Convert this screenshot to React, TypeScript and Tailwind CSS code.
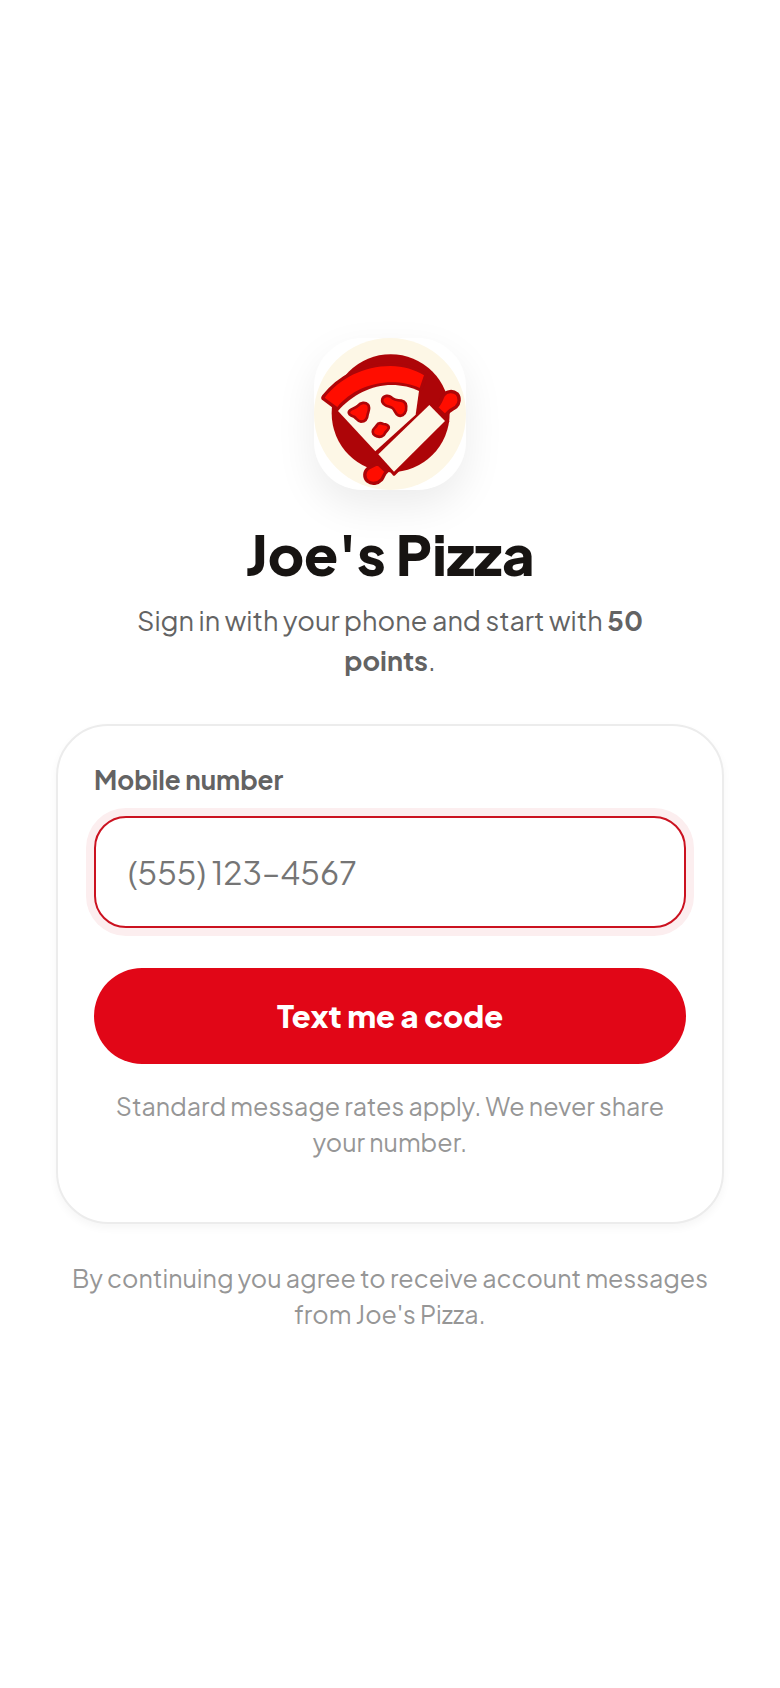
import { useState } from 'react';

const PizzaLogo = () => (
    <svg viewBox="42 39 456 456" className="block h-full w-full" role="img" aria-label="Joe's Pizza logo">
        <circle cx="270" cy="267" r="228" fill="#fdf7e6" />
        <circle cx="272" cy="265" r="177" fill="#ad0508" />

        {/* Slice: crust, then cheese */}
        <path
            d="M74 218 C120 160 190 123 272 123 C310 123 345 134 372 151 L359 189 C335 178 305 172 275 172 C210 172 150 200 112 246 Z"
            fill="#ff0d00"
            stroke="#ad0508"
            strokeWidth="20"
            strokeLinejoin="round"
            paintOrder="stroke"
        />
        <path d="M114 258 C155 210 215 180 275 180 C305 180 335 187 357 198 L347 269 L226 379 Z" fill="#fdf7e6" />

        {/* Toppings */}
        <g fill="#ff0d00" stroke="#ad0508" strokeWidth="8" strokeLinejoin="round">
            <path d="M149 257 C155 249 167 250 174 242 C182 232 196 231 204 239 C211 248 206 258 203 268 C202 280 196 290 183 290 C173 289 169 280 162 275 C151 272 142 265 149 257 Z" />
            <path d="M247 222 C252 211 266 210 274 217 C281 224 291 226 304 227 C319 230 320 244 318 256 C315 270 304 276 293 270 C285 264 284 254 277 249 C270 244 262 245 255 240 C248 235 245 229 247 222 Z" />
            <path d="M219 316 C222 308 227 307 230 301 C235 292 243 294 250 297 C258 297 268 301 266 310 C263 317 257 319 254 326 C251 334 240 338 231 334 C221 332 216 324 219 316 Z" />
        </g>

        {/* Rolling pin */}
        <g fill="#ff0d00" stroke="#ad0508" strokeWidth="10" strokeLinejoin="round">
            <path d="M408 247 C421 238 423 223 431 210 C440 198 459 196 471 206 C481 218 479 236 468 246 C458 254 446 254 436 273 Z" />
            <path d="M232 414 C224 422 212 424 203 431 C192 440 191 458 203 469 C215 479 234 476 245 464 C252 454 252 446 260 440 Z" />
            <path d="M388 240 L443 289 L282 447 L230 388 Z" fill="#ad0508" />
        </g>
        <path d="M388 240 L435 288 L282 440 L235 388 Z" fill="#fdf7e6" />
    </svg>
);

export default function App() {
    const [phone, setPhone] = useState('');

    return (
        <main className="flex min-h-screen flex-col items-center justify-center bg-white px-14 py-12 font-['Plus_Jakarta_Sans',Inter,sans-serif]">
            <header className="flex w-full flex-col items-center text-center">
                <div className="size-38 overflow-hidden rounded-[48px] bg-white shadow-[0_16px_40px_rgba(0,0,0,0.08)]">
                    <PizzaLogo />
                </div>
                <h1 className="mt-7 text-[56px] leading-[70px] font-extrabold text-[#171412]">Joe's Pizza</h1>
                <p className="mt-3 max-w-[560px] text-[27px] leading-10 text-[#636363]">
                    Sign in with your phone and start with <strong className="font-bold">50 points</strong>.
                </p>
            </header>

            <form
                className="mt-11 w-full rounded-[52px] border-2 border-[#ececec] bg-white px-9 pt-[34px] pb-[62px] shadow-[0_4px_8px_rgba(0,0,0,0.04)]"
                onSubmit={(e) => e.preventDefault()}
            >
                <label htmlFor="phone" className="block text-[26px] leading-10 font-bold text-[#636363]">
                    Mobile number
                </label>
                <input
                    id="phone"
                    type="tel"
                    value={phone}
                    onChange={(e) => setPhone(e.target.value)}
                    placeholder="(555) 123–4567"
                    className="mt-4 block h-28 w-full rounded-[32px] border-2 border-[#cb1220] bg-white px-8 text-[32px] text-[#171412] ring-8 ring-[#fceeef] outline-none placeholder:text-[#757575]"
                />
                <button
                    type="submit"
                    className="mt-10 block h-24 w-full rounded-full bg-[#e10617] text-[31px] font-extrabold text-white"
                >
                    Text me a code
                </button>
                <p className="mt-6 px-4 text-center text-[25px] leading-9 text-[#969696]">
                    Standard message rates apply. We never share your number.
                </p>
            </form>

            <p className="mt-9 mb-[18px] px-2 text-center text-[25px] leading-9 text-[#969696]">
                By continuing you agree to receive account messages from Joe's Pizza.
            </p>
        </main>
    );
}
